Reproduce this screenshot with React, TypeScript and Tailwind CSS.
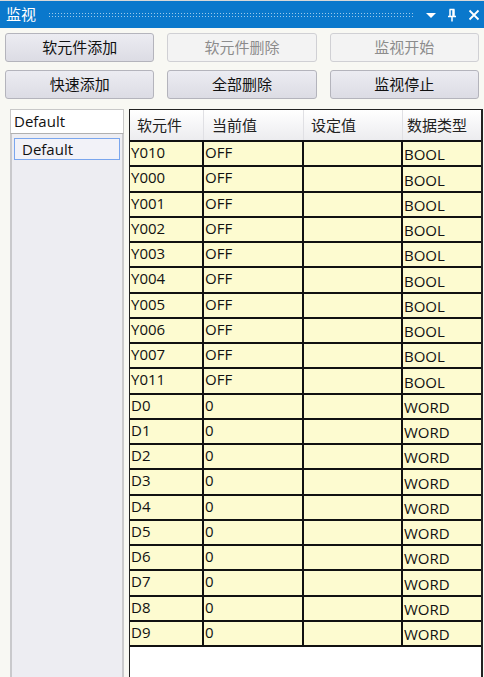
import React from "react";

const rows: [string, string, string][] = [
  ["Y010", "OFF", "BOOL"],
  ["Y000", "OFF", "BOOL"],
  ["Y001", "OFF", "BOOL"],
  ["Y002", "OFF", "BOOL"],
  ["Y003", "OFF", "BOOL"],
  ["Y004", "OFF", "BOOL"],
  ["Y005", "OFF", "BOOL"],
  ["Y006", "OFF", "BOOL"],
  ["Y007", "OFF", "BOOL"],
  ["Y011", "OFF", "BOOL"],
  ...Array.from({ length: 10 }, (_, i) => [`D${i}`, "0", "WORD"] as [string, string, string]),
];

const font = { fontFamily: '"Open Sans", "Noto Sans CJK SC", sans-serif' };

function Btn({ label, disabled }: { label: string; disabled?: boolean }) {
  return (
    <button
      className={
        "h-[29px] rounded-[3px] border text-[15px] leading-none " +
        (disabled
          ? "border-[#d0d0d4] bg-[#f3f3f3] text-[#8c8c8c]"
          : "border-[#b4b4bc] bg-gradient-to-b from-[#ececf2] to-[#dcdce4] text-[#111]")
      }
    >
      {label}
    </button>
  );
}

export default function App() {
  return (
    <div className="flex h-[677px] w-[484px] flex-col overflow-hidden bg-[#f8f8f3]" style={font}>
      <div className="flex h-[28px] items-center border-t border-[#d8d8d8] bg-[#0a78cc] pl-[6px] pr-[4px] text-white">
        <span className="text-[15px] leading-none">监视</span>
        <div className="mx-[12px] h-[5px] flex-1 bg-[radial-gradient(circle,#9cc8ea_0.6px,transparent_0.9px)] bg-[length:3px_3px]" />
        <svg width="12" height="10" viewBox="0 0 12 10" className="mr-[10px]">
          <path d="M1 3h10L6 8z" fill="white" />
        </svg>
        <svg width="10" height="14" viewBox="0 0 10 14" className="mr-[11px]">
          <path d="M2.5 1.5h5M3 1.5v7M7 1.5v7M6 1.5v7M1 8.5h8M5 8.5v5" stroke="white" strokeWidth="1.5" fill="none" />
        </svg>
        <svg width="12" height="12" viewBox="0 0 12 12">
          <path d="M1.5 1.5l9 9M10.5 1.5l-9 9" stroke="white" strokeWidth="1.8" />
        </svg>
      </div>

      <div className="grid grid-cols-3 gap-x-[13px] gap-y-[8px] px-[5px] pt-[5px]">
        <Btn label="软元件添加" />
        <Btn label="软元件删除" disabled />
        <Btn label="监视开始" disabled />
        <Btn label="快速添加" />
        <Btn label="全部删除" />
        <Btn label="监视停止" />
      </div>

      <div className="mt-[10px] flex min-h-0 flex-1 pl-[10px]">
        <div className="flex w-[114px] flex-col">
          <div className="flex h-[25px] items-center border border-[#c8c8c8] border-b-[#b0b0b0] bg-white pl-[3px] text-[15px] text-[#111]">
            Default
          </div>
          <div className="flex-1 border-x-2 border-[#c9c9cc] bg-[#ededf2] px-[2px] pt-[4px]">
            <div className="flex h-[22px] items-center border border-[#7aa6ee] bg-[#f2f2f8] pl-[7px] text-[15px] text-[#111]">
              Default
            </div>
          </div>
        </div>

        <div className="ml-[5px] flex w-[354px] flex-col border border-r-2 border-b-0 border-[#222] bg-white">
          <div className="flex h-[30px] bg-gradient-to-b from-white to-[#ececef] text-[15px] text-[#222]">
            <div className="flex w-[74px] items-center border-r border-[#e0e0e4] pl-[7px]">软元件</div>
            <div className="flex w-[100px] items-center border-r border-[#e0e0e4] pl-[8px]">当前值</div>
            <div className="flex w-[99px] items-center border-r border-[#e0e0e4] pl-[7px]">设定值</div>
            <div className="flex flex-1 items-center pl-[4px]">数据类型</div>
          </div>
          {rows.map(([name, val, type]) => (
            <div key={name} className="flex h-[25.25px] border-t-2 border-[#111] bg-[#fdfbd0] text-[15px] leading-[20px] text-[#111]">
              <div className="w-[74px] border-r-2 border-[#111] pl-[1px]">{name}</div>
              <div className="w-[100px] border-r-2 border-[#111] pl-[1px]">{val}</div>
              <div className="w-[99px] border-r-2 border-[#111]" />
              <div className="flex flex-1 items-end pb-[1px] pl-[1px]">{type}</div>
            </div>
          ))}
          <div className="flex-1 border-t-2 border-[#111] bg-white" />
        </div>
      </div>
    </div>
  );
}
